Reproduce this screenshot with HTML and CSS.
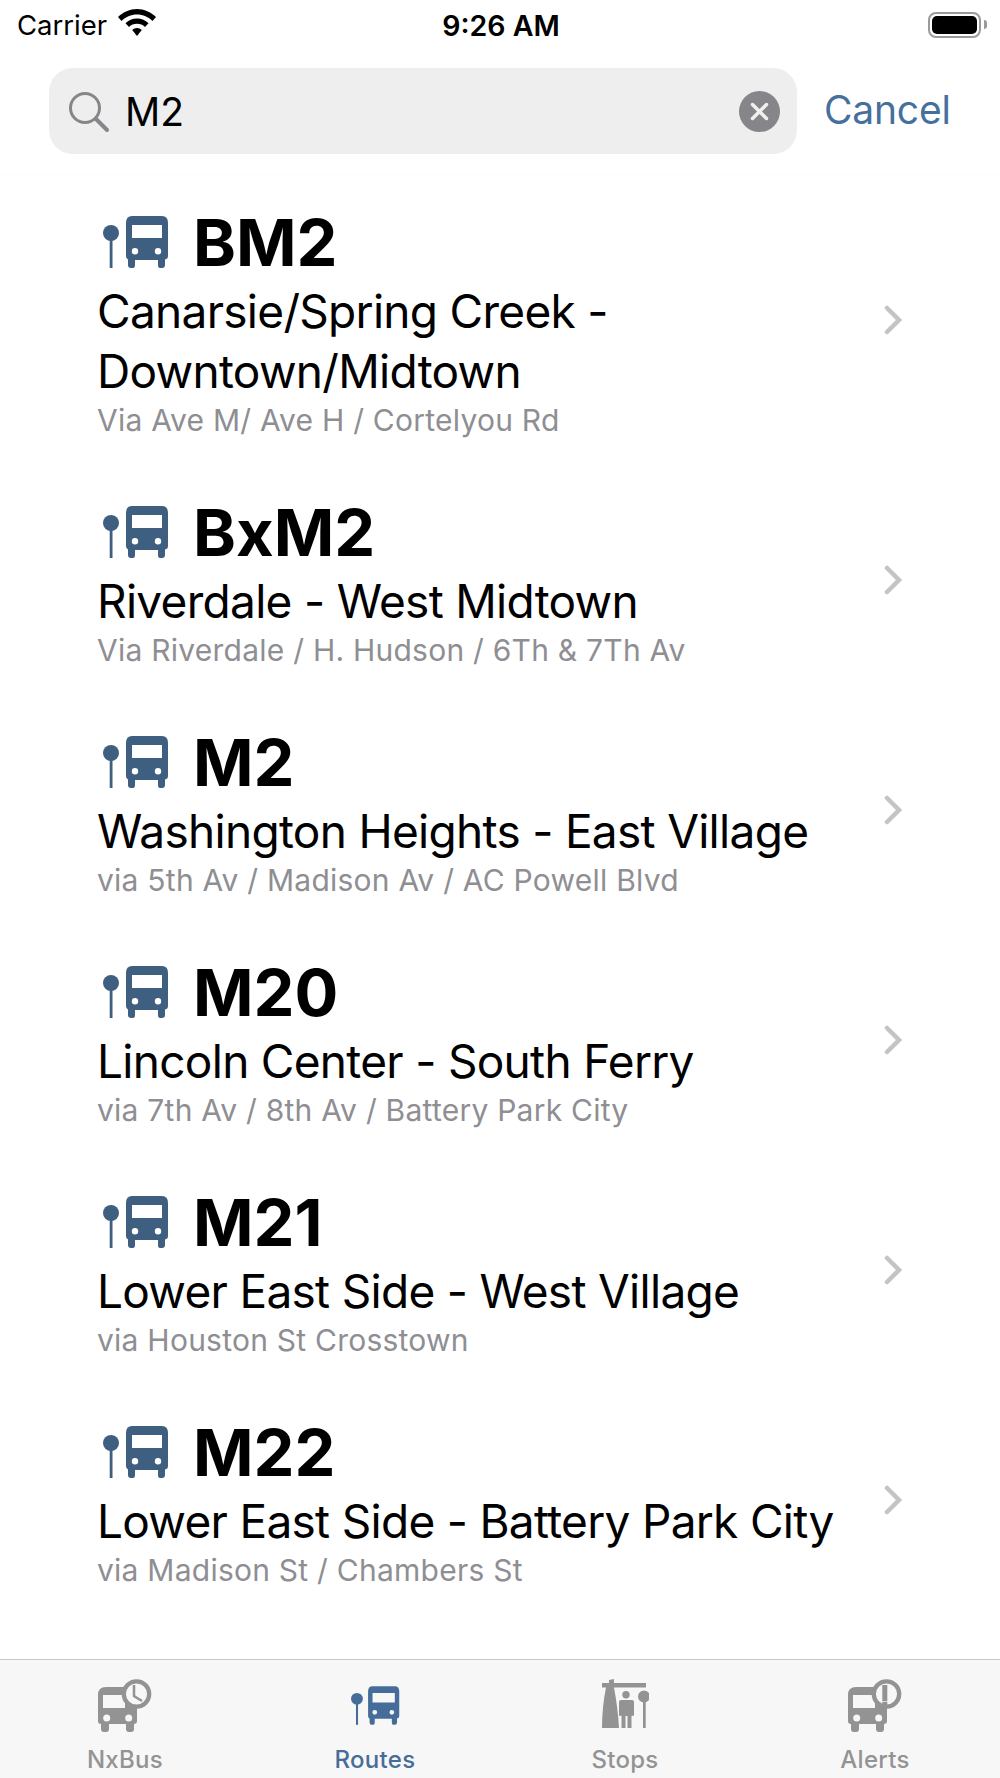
FILE: index.html
```html
<!DOCTYPE html>
<html lang="en">
<head>
    <meta charset="UTF-8">
    <meta name="viewport" content="width=device-width, initial-scale=1.0">
    <title>NxBus Routes</title>
    <link rel="stylesheet" href="styles.css">
</head>
<body>
    <svg class="defs" width="0" height="0">
        <symbol id="route-bus" viewBox="0 0 66 52">
            <circle cx="8" cy="17" r="8"/>
            <rect x="6.7" y="20" width="2.8" height="32"/>
            <path fill-rule="evenodd" d="M29 0H59Q65 0 65 7V40Q65 43 62 43.500V49Q62 52 59 52H57Q55 52 55 49V44H32V49Q32 52 30 52H28Q25 52 25 49V43.500Q23 43 23 40V7Q23 0 29 0ZM29 9V22H59V9ZM32 32A3.200 3.200 0 1 0 32 38.400A3.200 3.200 0 1 0 32 32ZM55 32A3.200 3.200 0 1 0 55 38.400A3.200 3.200 0 1 0 55 32Z"/>
        </symbol>
    </svg>

    <div class="phone">
        <div class="status-bar">
            <div class="status-left">
                <span>Carrier</span>
                <svg class="wifi" width="38" height="28" viewBox="0 0 38 28">
                    <path d="M19 0C26 0 33 3 38 8L34.500 12C30.500 8 25 5.500 19 5.500S7.500 8 3.500 12L0 8C5 3 12 0 19 0Z"/>
                    <path d="M19 9.500C23.500 9.500 27.500 11.300 30.500 14.300L27 18C25 16 22 14.800 19 14.800S13 16 11 18L7.500 14.300C10.500 11.300 14.500 9.500 19 9.500Z"/>
                    <path d="M19 19C21 19 22.500 19.700 23.800 21L19 27L14.200 21C15.500 19.700 17 19 19 19Z"/>
                </svg>
            </div>
            <span class="clock">9:26 AM</span>
            <div class="battery"><div class="battery-fill"></div></div>
        </div>

        <div class="search-row">
            <div class="search-box">
                <svg class="search-icon" width="42" height="42" viewBox="0 0 42 42">
                    <circle cx="17" cy="17" r="14.500" fill="none" stroke="#86868a" stroke-width="3"/>
                    <path d="M28 28L39 39" stroke="#86868a" stroke-width="4" stroke-linecap="round"/>
                </svg>
                <span class="search-text">M2</span>
                <svg class="clear-icon" width="41" height="41" viewBox="0 0 41 41">
                    <circle cx="20.500" cy="20.500" r="20.500" fill="#86868a"/>
                    <path d="M13.500 13.500L27.500 27.500M27.500 13.500L13.500 27.500" stroke="#f0f0f0" stroke-width="3.500" stroke-linecap="round"/>
                </svg>
            </div>
            <span class="cancel">Cancel</span>
        </div>

        <div class="route-list">
            <div class="route route-tall">
                <div class="route-info">
                    <div class="route-title"><svg class="bus-icon"><use href="#route-bus"/></svg><span>BM2</span></div>
                    <div class="route-name">Canarsie/Spring Creek - Downtown/Midtown</div>
                    <div class="route-via">Via Ave M/ Ave H / Cortelyou Rd</div>
                </div>
                <svg class="chevron" width="18" height="30" viewBox="0 0 18 30"><path d="M3 3L15 15L3 27"/></svg>
            </div>
            <div class="route">
                <div class="route-info">
                    <div class="route-title"><svg class="bus-icon"><use href="#route-bus"/></svg><span>BxM2</span></div>
                    <div class="route-name">Riverdale - West Midtown</div>
                    <div class="route-via">Via Riverdale / H. Hudson / 6Th &amp; 7Th Av</div>
                </div>
                <svg class="chevron" width="18" height="30" viewBox="0 0 18 30"><path d="M3 3L15 15L3 27"/></svg>
            </div>
            <div class="route">
                <div class="route-info">
                    <div class="route-title"><svg class="bus-icon"><use href="#route-bus"/></svg><span>M2</span></div>
                    <div class="route-name">Washington Heights - East Village</div>
                    <div class="route-via">via 5th Av / Madison Av / AC Powell Blvd</div>
                </div>
                <svg class="chevron" width="18" height="30" viewBox="0 0 18 30"><path d="M3 3L15 15L3 27"/></svg>
            </div>
            <div class="route">
                <div class="route-info">
                    <div class="route-title"><svg class="bus-icon"><use href="#route-bus"/></svg><span>M20</span></div>
                    <div class="route-name">Lincoln Center - South Ferry</div>
                    <div class="route-via">via 7th Av / 8th Av / Battery Park City</div>
                </div>
                <svg class="chevron" width="18" height="30" viewBox="0 0 18 30"><path d="M3 3L15 15L3 27"/></svg>
            </div>
            <div class="route">
                <div class="route-info">
                    <div class="route-title"><svg class="bus-icon"><use href="#route-bus"/></svg><span>M21</span></div>
                    <div class="route-name">Lower East Side - West Village</div>
                    <div class="route-via">via Houston St Crosstown</div>
                </div>
                <svg class="chevron" width="18" height="30" viewBox="0 0 18 30"><path d="M3 3L15 15L3 27"/></svg>
            </div>
            <div class="route">
                <div class="route-info">
                    <div class="route-title"><svg class="bus-icon"><use href="#route-bus"/></svg><span>M22</span></div>
                    <div class="route-name">Lower East Side - Battery Park City</div>
                    <div class="route-via">via Madison St / Chambers St</div>
                </div>
                <svg class="chevron" width="18" height="30" viewBox="0 0 18 30"><path d="M3 3L15 15L3 27"/></svg>
            </div>
        </div>

        <div class="tab-bar">
            <div class="tab">
                <svg class="tab-icon" width="54" height="53" viewBox="0 0 54 53">
                    <path fill-rule="evenodd" d="M8 8H31Q39 8 39 16V42Q39 45 36 45V50Q36 53 33 53H31Q28 53 28 50V45H11V50Q11 53 8 53H6Q3 53 3 50V45Q0 45 0 42V16Q0 8 8 8ZM5 16V29H27V16ZM8.700 35.500A3.500 3.500 0 1 0 8.700 42.500A3.500 3.500 0 1 0 8.700 35.500ZM30.700 35.500A3.500 3.500 0 1 0 30.700 42.500A3.500 3.500 0 1 0 30.700 35.500Z"/>
                    <circle cx="38.500" cy="15" r="12.700" fill="#f7f7f7" stroke="#939393" stroke-width="4.300"/>
                    <path d="M36 6V17L44 22" fill="none" stroke="#939393" stroke-width="2.500"/>
                </svg>
                <span>NxBus</span>
            </div>
            <div class="tab tab-active">
                <svg class="tab-route"><use href="#route-bus"/></svg>
                <span>Routes</span>
            </div>
            <div class="tab">
                <svg class="tab-icon" width="48" height="53" viewBox="0 0 48 53">
                    <path d="M1 4H8V1L13 0V4H45V8.500H13Q17 30 18 49H1Q1 28 5 8.500H1Z"/>
                    <circle cx="25" cy="15.700" r="3.700"/>
                    <path d="M20 21H31Q33 21 33 23V36.700H30.500V49H26.500V37H24.500V49H20.500V36.700H18V23Q18 21 20 21Z"/>
                    <circle cx="43" cy="17.500" r="6"/>
                    <rect x="42" y="20" width="2.700" height="29"/>
                </svg>
                <span>Stops</span>
            </div>
            <div class="tab">
                <svg class="tab-icon" width="54" height="53" viewBox="0 0 54 53">
                    <path fill-rule="evenodd" d="M8 8H31Q39 8 39 16V42Q39 45 36 45V50Q36 53 33 53H31Q28 53 28 50V45H11V50Q11 53 8 53H6Q3 53 3 50V45Q0 45 0 42V16Q0 8 8 8ZM5 16V29H27V16ZM8.700 35.500A3.500 3.500 0 1 0 8.700 42.500A3.500 3.500 0 1 0 8.700 35.500ZM30.700 35.500A3.500 3.500 0 1 0 30.700 42.500A3.500 3.500 0 1 0 30.700 35.500Z"/>
                    <circle cx="38.500" cy="15" r="12.700" fill="#f7f7f7" stroke="#939393" stroke-width="4.300"/>
                    <rect x="34.300" y="6" width="5" height="16"/>
                    <rect x="34.300" y="22.700" width="5" height="4"/>
                </svg>
                <span>Alerts</span>
            </div>
        </div>
    </div>
</body>
</html>
```

FILE: styles.css
```css
* {
    margin: 0;
    padding: 0;
    box-sizing: border-box;
}

body {
    font-family: Inter, "Liberation Sans", sans-serif;
    background-color: #ffffff;
    color: #000000;
}

.defs {
    display: block;
    height: 0;
}

.phone {
    display: flex;
    flex-direction: column;
    height: 1778px;
    overflow: hidden;
}

/* status bar */
.status-bar {
    display: grid;
    grid-template-columns: 1fr auto 1fr;
    align-items: center;
    height: 50px;
    padding: 0 15px 0 17px;
    font-size: 27.500px;
}

.status-left {
    display: flex;
    align-items: center;
    gap: 11px;
}

.wifi {
    margin-top: -4px;
}

.clock {
    font-weight: 600;
    font-size: 28.500px;
}

.battery {
    justify-self: end;
    width: 53px;
    height: 26px;
    border: 2px solid #9a9a9a;
    border-radius: 8px;
    padding: 2px;
    margin-right: 4px;
    position: relative;
}

.battery::after {
    content: "";
    position: absolute;
    right: -8px;
    top: 6px;
    width: 3px;
    height: 9px;
    background-color: #9a9a9a;
    border-radius: 0 3px 3px 0;
}

.battery-fill {
    height: 100%;
    background-color: #000000;
    border-radius: 5px;
}

/* search */
.search-row {
    display: flex;
    align-items: flex-start;
    height: 125px;
    padding: 18px 0 0 49px;
    border-bottom: 1px solid #fcfcfc;
}

.search-box {
    display: flex;
    align-items: center;
    width: 748px;
    height: 86px;
    background-color: #eeeeef;
    border-radius: 24px;
    padding: 0 17px 0 19px;
}

.search-icon {
    margin-top: 2px;
}

.search-text {
    font-size: 39px;
    margin-left: 15px;
    flex: 1;
}

.clear-icon {
    margin-top: 1px;
}

.cancel {
    font-size: 39px;
    letter-spacing: -0.2px;
    color: #45709d;
    margin: 18px 0 0 27px;
}

/* routes */
.route-list {
    flex: 1;
}

.route {
    display: flex;
    align-items: center;
    height: 230px;
    padding: 0 98px 0 97px;
}

.route-tall {
    height: 290px;
}

.route-info {
    flex: 1;
    max-width: 770px;
    padding-top: 2px;
}

.route-title {
    display: flex;
    align-items: center;
    height: 78px;
    font-size: 65px;
    font-weight: 700;
    gap: 24px;
}

.bus-icon {
    width: 66px;
    height: 52px;
    margin-left: 6px;
    fill: #3f5f80;
}

.route-name {
    font-size: 46px;
    line-height: 60px;
    letter-spacing: -0.7px;
}

.route-via {
    font-size: 30px;
    line-height: 38px;
    letter-spacing: 0.24px;
    color: #8e8e93;
}

.chevron {
    flex-shrink: 0;
    margin-left: auto;
    fill: none;
    stroke: #c4c4c7;
    stroke-width: 4.500;
    stroke-linecap: round;
}

/* tabs */
.tab-bar {
    display: flex;
    height: 119px;
    background-color: #f7f7f7;
    border-top: 1px solid #c8c8c8;
}

.tab {
    flex: 1;
    display: flex;
    flex-direction: column;
    align-items: center;
    color: #939393;
    font-size: 24px;
    font-weight: 500;
    letter-spacing: 0.3px;
    padding-top: 19px;
}

.tab span {
    margin-top: 13px;
}

.tab-icon {
    fill: #939393;
}

.tab-active {
    color: #466d99;
}

.tab-route {
    width: 49px;
    height: 39px;
    margin: 7px 0 7px;
    fill: #466d99;
}
```
